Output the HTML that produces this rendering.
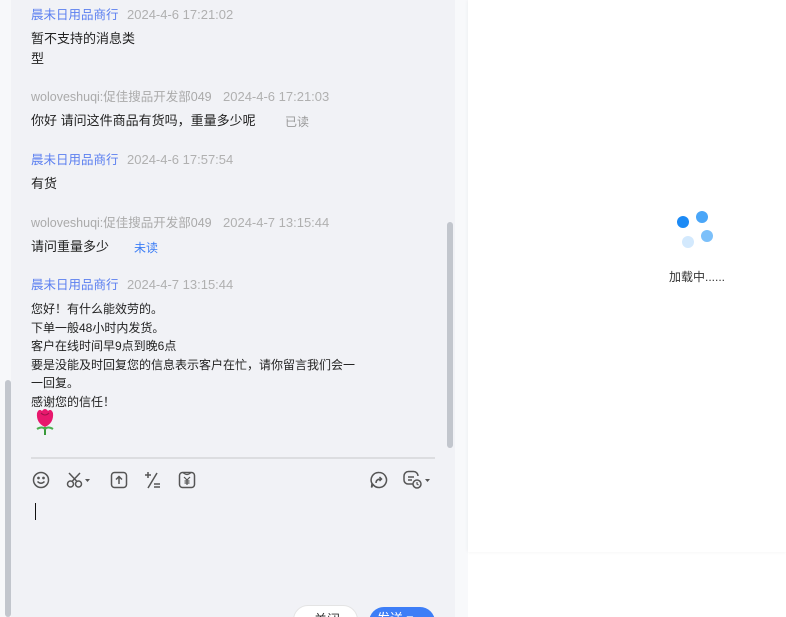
<!DOCTYPE html>
<html><head><meta charset="utf-8"><style>
*{margin:0;padding:0;box-sizing:border-box}
html,body{width:786px;height:617px;overflow:hidden}
body{background:#fff;font-family:"Liberation Sans","Noto Sans CJK SC",sans-serif;position:relative}
.abs{position:absolute;white-space:nowrap;line-height:18px}
.left{position:absolute;left:0;top:0;width:11px;height:617px;background:#f7f8fa}
.lsb{position:absolute;left:5px;top:380px;width:6px;height:237px;background:#c2c6cd;border-radius:3px}
.main{position:absolute;left:11px;top:0;width:444px;height:617px;background:#f1f2f6}
.gap{position:absolute;left:455px;top:0;width:13px;height:617px;background:#f8f9fb}
.isb{position:absolute;left:447px;top:222px;width:6px;height:226px;background:#c2c6cd;border-radius:3px}
.card{position:absolute;left:468px;top:0;width:318px;height:552px;background:#fff;box-shadow:0 0 4px rgba(0,0,0,.06)}
.n{font-size:12.5px;color:#5b7ff0}
.n2{font-size:12.5px;color:#aaa}
.t{font-size:13px;color:#b0b0b0}
.m{font-size:13px;color:#222}
.s{font-size:12px;color:#222;line-height:18.5px}
svg{position:absolute}
</style></head><body>
<div class="left"></div><div class="lsb"></div>
<div class="main"></div><div class="gap"></div>
<div class="isb"></div>
<div class="card"></div>

<div class="abs n" style="left:31px;top:6px">晨未日用品商行</div><div class="abs t" style="left:127px;top:6px">2024-4-6 17:21:02</div>
<div class="abs m" style="left:31px;top:30px">暂不支持的消息类</div>
<div class="abs m" style="left:31px;top:50px">型</div>

<div class="abs n2" style="left:31px;top:88px">woloveshuqi:促佳搜品开发部049</div><div class="abs t" style="left:223px;top:88px">2024-4-6 17:21:03</div>
<div class="abs m" style="left:31px;top:112px">你好 请问这件商品有货吗，重量多少呢</div><div class="abs" style="left:285px;top:113px;font-size:12px;color:#999">已读</div>

<div class="abs n" style="left:31px;top:151px">晨未日用品商行</div><div class="abs t" style="left:127px;top:151px">2024-4-6 17:57:54</div>
<div class="abs m" style="left:31px;top:175px">有货</div>

<div class="abs n2" style="left:31px;top:214px">woloveshuqi:促佳搜品开发部049</div><div class="abs t" style="left:223px;top:214px">2024-4-7 13:15:44</div>
<div class="abs m" style="left:31px;top:238px">请问重量多少</div><div class="abs" style="left:134px;top:239px;font-size:12px;color:#3a7cf5">未读</div>

<div class="abs n" style="left:31px;top:276px">晨未日用品商行</div><div class="abs t" style="left:127px;top:276px">2024-4-7 13:15:44</div>
<div class="abs s" style="left:31px;top:300px">您好！有什么能效劳的。<br>下单一般48小时内发货。<br>客户在线时间早9点到晚6点<br>要是没能及时回复您的信息表示客户在忙，请你留言我们会一<br>一回复。<br>感谢您的信任！</div>
<svg style="left:33px;top:407px" width="24" height="28" viewBox="0 0 24 28"><path d="M12 20v8" stroke="#3a9a3a" stroke-width="2"/><path d="M4 22q5-3 8 0M20 22q-5-3-8 0" stroke="#4caf50" stroke-width="2" fill="none"/><path d="M4 6q2-5 5-2q3-4 6 0q3-3 5 2q1 10-8 14q-9-4-8-14z" fill="#e8186d"/><path d="M8 6q4 4 8 0" stroke="#a0104a" fill="none"/></svg>

<div style="position:absolute;left:31px;top:457px;width:404px;height:2px;background:#dcdde0"></div>
<svg style="left:32px;top:471px" width="18" height="18" viewBox="0 0 18 18" fill="none" stroke="#555" stroke-width="1.5"><circle cx="9" cy="9" r="7.5"/><circle cx="6.5" cy="7" r=".6" fill="#555"/><circle cx="11.5" cy="7" r=".6" fill="#555"/><path d="M5.5 10.5q3.5 3.5 7 0"/></svg>
<svg style="left:66px;top:471px" width="28" height="18" viewBox="0 0 28 18" fill="none" stroke="#555" stroke-width="1.5"><circle cx="4.5" cy="13" r="3"/><circle cx="12.5" cy="13" r="3"/><path d="M6 10.5L14 2M11 10.5L3 2"/><path d="M19 8h5l-2.5 3z" fill="#555" stroke="none"/></svg>
<svg style="left:110px;top:471px" width="18" height="18" viewBox="0 0 18 18" fill="none" stroke="#555" stroke-width="1.5"><rect x="1.5" y="1.5" width="15" height="15" rx="3"/><path d="M9 13V6M6 8.5l3-3 3 3"/></svg>
<svg style="left:144px;top:471px" width="18" height="18" viewBox="0 0 18 18" fill="none" stroke="#555" stroke-width="1.5"><path d="M1 4h6M4 1v6M13 2L4 17M10 13h6M10 16h6"/></svg>
<svg style="left:178px;top:471px" width="18" height="18" viewBox="0 0 18 18" fill="none" stroke="#555" stroke-width="1.5"><rect x="1.5" y="1.5" width="15" height="15" rx="3"/><path d="M5 1.5q4 4 8 0M6 6l3 3 3-3M9 9v5M6.5 10h5M6.5 12h5" stroke-width="1.2"/></svg>
<svg style="left:370px;top:471px" width="18" height="18" viewBox="0 0 18 18" fill="none" stroke="#555" stroke-width="1.5"><path d="M9 1.5a7.5 7.5 0 1 1-6 12l-1.5 3 .5-4A7.5 7.5 0 0 1 9 1.5z"/><path d="M6 12q0-4 5-4M9.5 6l2 2-2 2"/></svg>
<svg style="left:403px;top:470px" width="32" height="20" viewBox="0 0 32 20" fill="none" stroke="#555" stroke-width="1.5"><path d="M10 14H5a4 4 0 0 1-4-4V6a4.5 4.5 0 0 1 4.5-4.5h5A4.5 4.5 0 0 1 15 6"/><path d="M5 7h6M5 10h4"/><circle cx="14" cy="14" r="4"/><path d="M14 12v2l1.5 1" stroke-width="1.2"/><path d="M22 9h5l-2.5 3z" fill="#555" stroke="none"/></svg>

<div style="position:absolute;left:35px;top:503px;width:1px;height:17px;background:#111"></div>

<div style="position:absolute;left:293px;top:605px;width:65px;height:30px;border-radius:15px;background:#fff;border:1px solid #e4e4e4"><span class="abs" style="left:20px;top:5px;font-size:13px;color:#333">关闭</span></div>
<div style="position:absolute;left:369px;top:607px;width:66px;height:30px;border-radius:15px;background:#3d7ef7"><span class="abs" style="left:8px;top:3px;font-size:13px;color:#fff">发送 ▾</span></div>

<div style="position:absolute;left:677px;top:216px;width:12px;height:12px;border-radius:50%;background:#1c8af5"></div>
<div style="position:absolute;left:696px;top:211px;width:12px;height:12px;border-radius:50%;background:#4aa6f8"></div>
<div style="position:absolute;left:701px;top:230px;width:12px;height:12px;border-radius:50%;background:#7cc0fa"></div>
<div style="position:absolute;left:682px;top:236px;width:12px;height:12px;border-radius:50%;background:#d3e9fd"></div>
<div class="abs" style="left:669px;top:268px;font-size:12px;color:#333">加载中......</div>
</body></html>
